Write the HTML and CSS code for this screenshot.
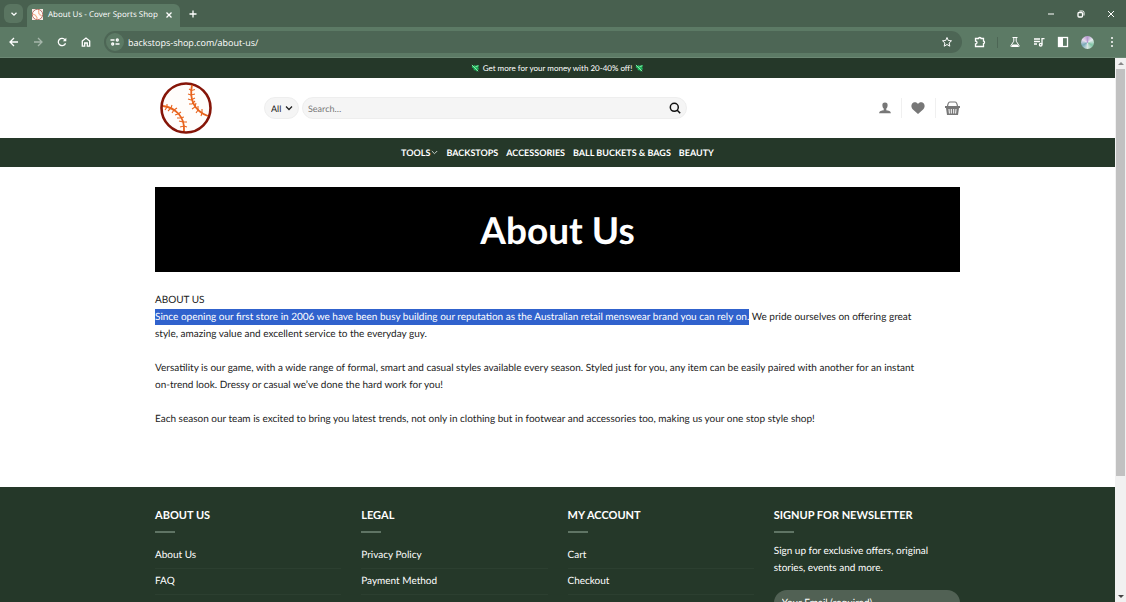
FILE: index.html
```html
<!DOCTYPE html>
<html lang="en">

<head>
    <meta charset="UTF-8">
    <meta name="viewport" content="width=device-width, initial-scale=1.0">
    <title>About Us - Cover Sports Shop</title>
    <link rel="stylesheet" href="styles.css">
</head>

<body>
    <svg class="defs" width="0" height="0" aria-hidden="true">
        <symbol id="ball" viewBox="0 0 52 52">
            <circle cx="26" cy="26" r="24.5" fill="#fffdfb" stroke="#861508" stroke-width="2.6" />
            <g fill="none" stroke="#e8641e">
                <path d="M32 3C29 17 34 29 48 34M3 24C16 26 25 35 24 49" stroke-width="1.8" />
                <path d="M29 7l2.500 1.500 3.500-1M28 12l3 1 4-1M28 17l3 1 4-2M29 22l3 0 3-3M32 27l3-2 1-4M36 31l2-3 0-4M41 34l1-3 0-4M7 22l0 3-2 3M12 23l-1 3-3 3M17 26l-3 2-2 3M21 30l-3 2-3 1M24 35l-4 1-3 0M27 40l-4 0-4-1M27 45l-3-1-4 1" stroke-width="1.1" />
            </g>
        </symbol>
        <symbol id="money" viewBox="0 0 10 10">
            <path d="M1 2l2 0 1-1 1 1 4-1-1 3 1 2-2 0 0 3-2-2-2 0 0-2-2-1z" fill="#22b35e" />
            <path d="M1 1l7 7M5 3l3-1" stroke="#8ff0b0" stroke-width="1" fill="none" />
        </symbol>
    </svg>

    <div class="browser">
        <div class="tabs">
            <button class="tab-search" type="button" aria-label="Search tabs">
                <svg width="8" height="8" viewBox="0 0 8 8"><path d="M1.5 2.8L4 5.2l2.500-2.400" /></svg>
            </button>
            <div class="tab">
                <span class="favicon"><svg width="11" height="11"><use href="#ball" /></svg></span>
                <span class="tab-title">About Us - Cover Sports Shop</span>
                <button class="plain" type="button" aria-label="Close tab">
                    <svg width="8" height="8" viewBox="0 0 8 8"><path d="M1.500 1.500l5 5m0-5l-5 5" /></svg>
                </button>
            </div>
            <button class="plain new-tab" type="button" aria-label="New tab">
                <svg width="10" height="10" viewBox="0 0 10 10"><path d="M5 1.500v7M1.500 5h7" /></svg>
            </button>
            <div class="window-buttons">
                <button class="plain" type="button" aria-label="Minimize">
                    <svg width="10" height="10" viewBox="0 0 10 10"><path d="M2 5h6" stroke-width="1" /></svg>
                </button>
                <button class="plain" type="button" aria-label="Restore">
                    <svg width="10" height="10" viewBox="0 0 10 10"><rect x="2" y="3.500" width="4.500" height="4.500" rx="1" /><path d="M3.500 2h3A1.500 1.500 0 0 1 8 3.500v3" stroke-width="1" /></svg>
                </button>
                <button class="plain" type="button" aria-label="Close">
                    <svg width="10" height="10" viewBox="0 0 10 10"><path d="M2 2l6 6m0-6L2 8" stroke-width="1" /></svg>
                </button>
            </div>
        </div>
        <div class="toolbar">
            <button class="plain" type="button" aria-label="Back">
                <svg width="12" height="12" viewBox="0 0 12 12"><path d="M10 6H2.500M6 2L2 6l4 4" /></svg>
            </button>
            <button class="plain dim" type="button" aria-label="Forward">
                <svg width="12" height="12" viewBox="0 0 12 12"><path d="M2 6h7.500M6 2l4 4-4 4" /></svg>
            </button>
            <button class="plain" type="button" aria-label="Reload">
                <svg width="12" height="12" viewBox="0 0 12 12"><path d="M9.500 7.200A3.700 3.700 0 1 1 9 3.800" /><path d="M10.300 1.700v3.500H6.800z" class="fill" /></svg>
            </button>
            <button class="plain" type="button" aria-label="Home">
                <svg width="12" height="12" viewBox="0 0 12 12"><path d="M2.300 5L6 2l3.700 3v5.200H7.300V7H4.700v3.200H2.300z" /></svg>
            </button>
            <div class="address">
                <span class="site-info"><svg width="10" height="10" viewBox="0 0 10 10"><path d="M.5 3h4M5.500 7h4" /><circle cx="7.300" cy="3" r="1" /><circle cx="2.700" cy="7" r="1" /></svg></span>
                <input type="text" aria-label="Address" value="backstops-shop.com/about-us/">
                <button class="plain" type="button" aria-label="Bookmark">
                    <svg class="thin" width="12" height="12" viewBox="0 0 12 12"><path d="M6 1.500l1.300 3 3.200.3L8.100 7l.7 3.200L6 8.500l-2.800 1.700L3.900 7 1.500 4.800l3.200-.3z" /></svg>
                </button>
            </div>
            <div class="extensions">
                <button class="plain" type="button" aria-label="Extensions">
                    <svg width="12" height="12" viewBox="0 0 12 12"><path d="M1.500 2.500H4.500a1.300 1 0 0 1 2.600 0H9.500V5a1 1.300 0 0 1 0 2.600v2.900h-8V8a1.500 1.500 0 0 0 0-3z" /></svg>
                </button>
                <span class="divider"></span>
                <button class="plain" type="button" aria-label="Labs">
                    <svg class="thin" width="12" height="12" viewBox="0 0 12 12"><path d="M3.500 1.500h5M4.800 1.500v3.700L1.800 9.800q-.2.700.5.700h7.400q.7 0 .5-.7L7.200 5.200V1.500" /><path d="M3.500 8.500h5l1 1.500h-7z" class="fill" /></svg>
                </button>
                <button class="plain" type="button" aria-label="Media">
                    <svg width="12" height="12" viewBox="0 0 12 12"><path d="M1 3h6M1 5.500h6M1 8h3M9 8.500V2.600h2.500" /><circle cx="7.700" cy="8.700" r="1.300" /></svg>
                </button>
                <button class="plain" type="button" aria-label="Side panel">
                    <svg width="12" height="12" viewBox="0 0 12 12"><rect x="1.500" y="1.500" width="9" height="9" /><path d="M1.500 1.500H6v9H1.500z" class="fill" /></svg>
                </button>
                <button class="avatar" type="button" aria-label="Profile"></button>
                <button class="plain" type="button" aria-label="Menu">
                    <svg width="12" height="12" viewBox="0 0 12 12"><g class="fill"><circle cx="6" cy="2" r="1" /><circle cx="6" cy="6" r="1" /><circle cx="6" cy="10" r="1" /></g></svg>
                </button>
            </div>
        </div>
    </div>

    <div class="viewport">
        <div class="page">
            <div class="promo">
                <svg width="9" height="9"><use href="#money" /></svg>
                <span>Get more for your money with 20-40% off!</span>
                <svg width="9" height="9"><use href="#money" /></svg>
            </div>

            <header class="header">
                <div class="container header-inner">
                    <a class="logo" href="#" aria-label="Home"><svg width="52" height="52"><use href="#ball" /></svg></a>
                    <form class="search" role="search" onsubmit="return false;">
                        <div class="select-wrap">
                            <select aria-label="Category">
                                <option>All</option>
                            </select>
                            <svg width="8" height="8" viewBox="0 0 8 8"><path d="M1 2.500l3 3 3-3" /></svg>
                        </div>
                        <div class="search-box">
                            <input type="search" placeholder="Search…" aria-label="Search">
                            <button type="submit" aria-label="Search">
                                <svg width="12" height="12" viewBox="0 0 12 12"><circle cx="5.300" cy="5.300" r="4" /><path d="M8.200 8.200l3 3" /></svg>
                            </button>
                        </div>
                    </form>
                    <nav class="header-icons">
                        <a href="#" aria-label="Account">
                            <svg width="12" height="12" viewBox="0 0 12 12"><path d="M6 .5c2 0 2.800 1.200 2.600 3C8.500 5 8 6 7.300 6.500v1.800c2 .5 4.400.4 4.600 3H.1C.3 8.700 2.700 8.800 4.700 8.300V6.500C4 6 3.500 5 3.400 3.500 3.200 1.700 4 .5 6 .5z" /></svg>
                        </a>
                        <a href="#" aria-label="Wishlist">
                            <svg width="14" height="12" viewBox="0 0 14 12"><path d="M7 2C8.200-.2 11.300-.3 12.800 1.500 14.300 3.500 13.600 6 11.800 7.800L7 12 2.200 7.800C.4 6-.3 3.500 1.200 1.500 2.700-.3 5.800-.2 7 2z" /></svg>
                        </a>
                        <a href="#" aria-label="Cart">
                            <svg width="15" height="14" viewBox="0 0 15 14"><path d="M2.500 5.500C3 1.500 4 1 5 1h5c1 0 2 .5 2.500 4.500" fill="none" stroke="#777" stroke-width="1.200" /><path d="M0 5h15v2h-1l-1 7H2L1 7H0z" /><path d="M4 8l.4 4.500M6.300 8v4.500M8.700 8v4.500M11 8l-.4 4.500" stroke="#fff" stroke-width="1" /></svg>
                        </a>
                    </nav>
                </div>
            </header>

            <nav class="main-nav">
                <a href="#">TOOLS <svg width="7" height="7" viewBox="0 0 7 7"><path d="M.8 2l2.700 2.700L6.200 2" /></svg></a>
                <a href="#">BACKSTOPS</a>
                <a href="#">ACCESSORIES</a>
                <a href="#">BALL BUCKETS &amp; BAGS</a>
                <a href="#">BEAUTY</a>
            </nav>

            <main class="container content">
                <div class="banner">
                    <h1>About Us</h1>
                </div>
                <div class="text">
                    <p>ABOUT US<br>
                        <mark>Since opening our first store in 2006 we have been busy building our reputation as the Australian retail menswear brand you can rely on.</mark> We pride ourselves on offering great style, amazing value and excellent service to the everyday guy.</p>
                    <p>Versatility is our game, with a wide range of formal, smart and casual styles available every season. Styled just for you, any item can be easily paired with another for an instant on-trend look. Dressy or casual we’ve done the hard work for you!</p>
                    <p>Each season our team is excited to bring you latest trends, not only in clothing but in footwear and accessories too, making us your one stop style shop!</p>
                </div>
            </main>

            <footer class="footer">
                <div class="container footer-grid">
                    <section>
                        <h2>ABOUT US</h2>
                        <ul>
                            <li><a href="#">About Us</a></li>
                            <li><a href="#">FAQ</a></li>
                        </ul>
                    </section>
                    <section>
                        <h2>LEGAL</h2>
                        <ul>
                            <li><a href="#">Privacy Policy</a></li>
                            <li><a href="#">Payment Method</a></li>
                        </ul>
                    </section>
                    <section>
                        <h2>MY ACCOUNT</h2>
                        <ul>
                            <li><a href="#">Cart</a></li>
                            <li><a href="#">Checkout</a></li>
                        </ul>
                    </section>
                    <section>
                        <h2>SIGNUP FOR NEWSLETTER</h2>
                        <p>Sign up for exclusive offers, original stories, events and more.</p>
                        <input type="email" placeholder="Your Email (required)" aria-label="Your Email (required)">
                    </section>
                </div>
            </footer>
        </div>
        <div class="scrollbar" aria-hidden="true">
            <span class="arrow up"></span>
            <span class="thumb"></span>
            <span class="arrow down"></span>
        </div>
    </div>
</body>

</html>
```

FILE: styles.css
```css
* {
    box-sizing: border-box;
}

body {
    margin: 0;
    height: 100vh;
    display: flex;
    flex-direction: column;
    overflow: hidden;
    font-family: Lato, sans-serif;
    font-size: 10px;
    line-height: 17px;
    text-rendering: geometricPrecision;
    color: #222;
    background-color: #fff;
}

a {
    color: inherit;
    text-decoration: none;
}

button,
input,
select {
    font: inherit;
    color: inherit;
    border: none;
    padding: 0;
    margin: 0;
    outline: none;
    text-rendering: inherit;
}

svg {
    display: block;
    flex: none;
}

.defs {
    position: absolute;
}

/* browser window */
.browser {
    flex: none;
    font-family: "Open Sans", sans-serif;
    color: #fff;
    background-color: #48604f;
}

.browser button svg,
.site-info svg {
    fill: none;
    stroke: #fff;
    stroke-width: 1.3;
}

.browser button .thin {
    stroke-width: 1;
}

.browser svg .fill {
    fill: #fff;
    stroke: none;
}

.plain {
    display: flex;
    background: none;
}

.dim {
    opacity: 0.45;
}

.tabs {
    display: flex;
    align-items: center;
    height: 27px;
    padding-left: 4px;
}

.tab-search {
    display: flex;
    align-items: center;
    justify-content: center;
    width: 19px;
    height: 19px;
    margin-right: 4px;
    border-radius: 6px;
    background-color: #5a7561;
}

.tab {
    display: flex;
    align-items: center;
    align-self: flex-end;
    width: 153px;
    height: 23px;
    padding: 0 7px 2px 5px;
    border-radius: 6px 6px 0 0;
    background-color: #5c7a65;
}

.favicon {
    margin-right: 5px;
    background-color: #f7e9e3;
}

.tab-title {
    flex: 1;
    font-size: 8px;
    white-space: nowrap;
}

.new-tab {
    margin-left: 8px;
}

.window-buttons {
    display: flex;
    gap: 20px;
    margin-left: auto;
    padding-right: 10px;
}

.toolbar {
    display: flex;
    align-items: center;
    gap: 12px;
    height: 31px;
    padding: 0 8px;
    border-bottom: 1px solid #6c8874;
    background-color: #5c7a65;
}

.address {
    display: flex;
    align-items: center;
    flex: 1;
    height: 22px;
    padding: 0 9px 0 2px;
    border-radius: 11px;
    background-color: #4d6655;
}

.site-info {
    display: flex;
    align-items: center;
    justify-content: center;
    width: 18px;
    height: 18px;
    margin-right: 4px;
    border-radius: 50%;
    background-color: #5c7a65;
}

.address input {
    flex: 1;
    font-size: 9px;
    background: none;
}

.extensions {
    display: flex;
    align-items: center;
    gap: 12px;
}

.divider {
    width: 1px;
    height: 11px;
    margin: 0 -1px;
    background-color: #4d6655;
}

.avatar {
    width: 13px;
    height: 13px;
    border-radius: 50%;
    background: conic-gradient(#b79bd0, #e6edf0, #7fc4a4, #d9e7e4, #78a8b8, #eadff0, #b79bd0);
}

/* web page */
.viewport {
    display: flex;
    flex: 1;
    min-height: 0;
}

.page {
    flex: 1;
    overflow: hidden;
}

.container {
    max-width: 805px;
    margin: 0 auto;
}

.promo {
    display: flex;
    align-items: center;
    justify-content: center;
    gap: 3px;
    height: 20px;
    font-size: 8px;
    color: #fff;
    background-color: #253829;
}

.header-inner {
    display: flex;
    align-items: center;
    height: 60px;
}

.logo {
    margin: 0 52px 0 5px;
}

.search {
    display: flex;
    gap: 3px;
    flex: 1;
    max-width: 423px;
}

.select-wrap {
    position: relative;
    width: 35px;
}

.select-wrap select {
    width: 100%;
    height: 22px;
    padding-left: 6px;
    border: 1px solid #eee;
    border-radius: 11px;
    font-size: 9px;
    color: #222;
    appearance: none;
    background-color: #f5f5f5;
}

.select-wrap svg {
    position: absolute;
    top: 7px;
    right: 6px;
    fill: none;
    stroke: #222;
    stroke-width: 1.3;
    pointer-events: none;
}

.search-box {
    display: flex;
    align-items: center;
    flex: 1;
    height: 22px;
    padding: 0 5px;
    border: 1px solid #eee;
    border-radius: 11px;
    background-color: #f5f5f5;
}

.search-box input {
    flex: 1;
    font-size: 9px;
    background: none;
}

.search-box input::placeholder {
    color: #777;
}

.search-box button {
    background: none;
}

.search-box svg {
    fill: none;
    stroke: #111;
    stroke-width: 1.5;
}

.header-icons {
    display: flex;
    margin-left: auto;
}

.header-icons a {
    display: flex;
    align-items: center;
    height: 20px;
    padding: 0 10px 0 9px;
    border-left: 1px solid #f0f0f0;
    fill: #777;
}

.header-icons a:first-child {
    border-left: none;
}

.header-icons a:last-child {
    padding-right: 0;
}

.main-nav {
    display: flex;
    align-items: center;
    justify-content: center;
    gap: 8px;
    height: 29px;
    font-size: 9px;
    font-weight: 700;
    color: #fff;
    background-color: #253829;
}

.main-nav a {
    display: flex;
    align-items: center;
    gap: 1px;
}

.main-nav svg {
    fill: none;
    stroke: #c8d0ca;
}

.content {
    padding: 20px 0 42px;
}

.banner {
    margin-bottom: 20px;
    padding: 20px;
    text-align: center;
    color: #fff;
    background-color: #000;
}

.banner h1 {
    margin: 0;
    font-size: 37px;
    line-height: 45px;
}

.text {
    padding-right: 30px;
}

.text p {
    margin: 0 0 17px;
}

.text mark {
    padding: 2px 0;
    color: #fff;
    background-color: #3062cd;
}

.footer {
    padding-top: 20px;
    color: #fff;
    background-color: #253829;
}

.footer-grid {
    display: grid;
    grid-template-columns: repeat(4, 1fr);
    gap: 20px;
}

.footer h2 {
    margin: 0;
    font-size: 11px;
    line-height: 17px;
}

.footer h2::after {
    content: "";
    display: block;
    width: 20px;
    height: 2px;
    margin: 7px 0 10px;
    background-color: #5f7464;
}

.footer ul {
    margin: 0;
    padding: 0;
    list-style: none;
}

.footer li {
    padding: 4px 0;
    border-bottom: 1px solid #2c3f30;
}

.footer p {
    margin: 0 0 13px;
}

.footer input {
    width: 100%;
    height: 26px;
    padding: 0 8px;
    border-radius: 13px;
    background-color: #516154;
}

.footer input::placeholder {
    color: #fff;
}

.scrollbar {
    display: flex;
    flex-direction: column;
    align-items: center;
    width: 11px;
    padding: 4px 0;
    background-color: #f1f1f1;
}

.arrow {
    border: 3px solid transparent;
}

.up {
    border-top: none;
    border-bottom-color: #888;
}

.down {
    margin-top: auto;
    border-bottom: none;
    border-top-color: #444;
}

.thumb {
    width: 9px;
    height: 76%;
    margin-top: 4px;
    background-color: #c1c1c1;
}
```
